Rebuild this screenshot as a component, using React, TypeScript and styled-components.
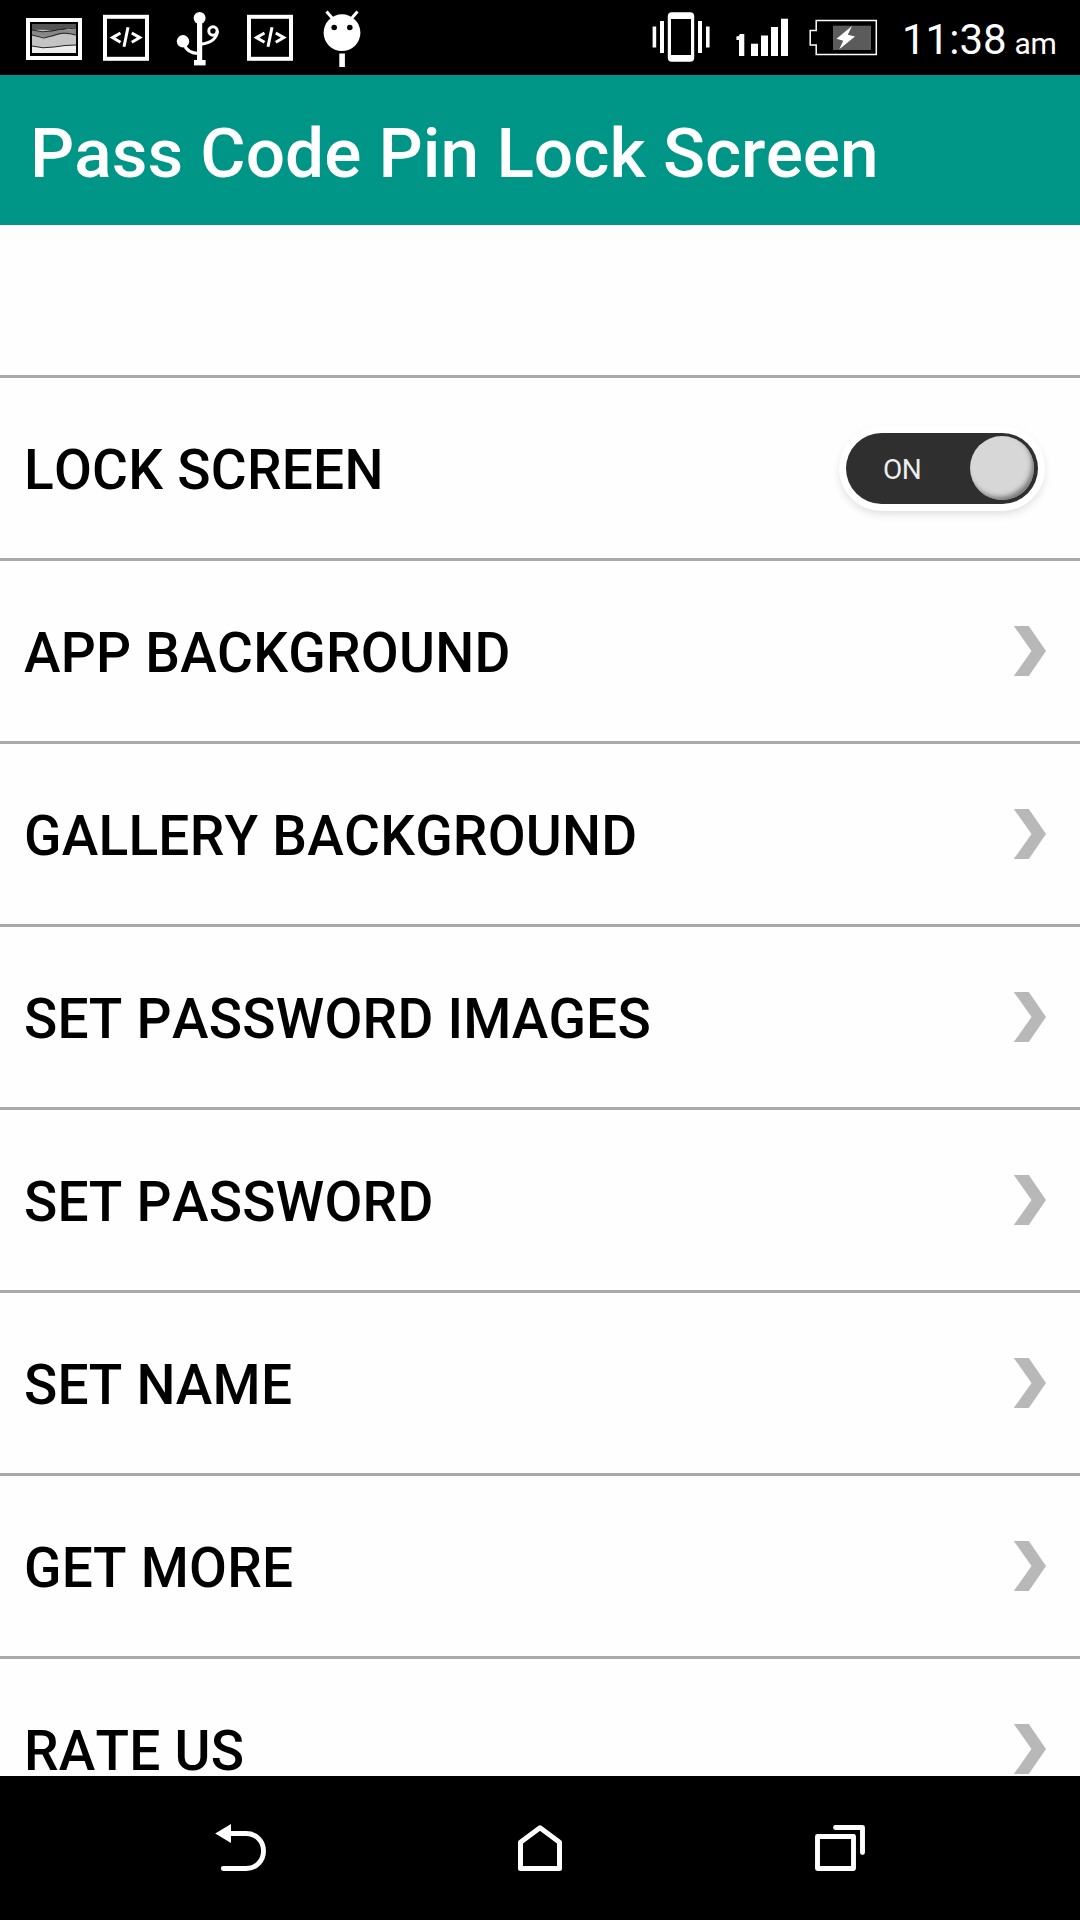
import React from "react";
import styled, { createGlobalStyle } from "styled-components";

const GlobalStyle = createGlobalStyle`
  body { margin: 0; background: #000; }
  * { box-sizing: border-box; }
`;

const Screen = styled.div`
  width: 1080px;
  height: 1920px;
  display: flex;
  flex-direction: column;
  overflow: hidden;
  background: #fefefe;
  font-family: Roboto, "Noto Sans", sans-serif;
  font-kerning: none;
`;

const StatusBar = styled.header`
  flex: none;
  height: 75px;
  display: flex;
  align-items: flex-start;
  padding-left: 26px;
  background: #000;
  color: #fff;
`;

const IconGroup = styled.div<{ $gap: number; $start?: number }>`
  display: flex;
  gap: ${(p) => p.$gap}px;
  margin-left: ${(p) => p.$start ?? 0}px;
`;

const Glyph = styled.svg`
  display: block;
  flex: none;
`;

const Clock = styled.div`
  display: flex;
  align-items: baseline;
  height: 75px;
  margin-left: 24px;
  font-size: 42px;
  line-height: 80px;
  white-space: nowrap;
`;

const Meridiem = styled.span`
  margin-left: 8px;
  font-size: 30px;
  letter-spacing: -0.5px;
`;

const AppBar = styled.div`
  flex: none;
  height: 150px;
  display: flex;
  align-items: center;
  padding: 8px 0 0 30px;
  background: #009687;
`;

const Title = styled.h1`
  margin: 0;
  color: #fff;
  font-size: 69.4px;
  font-weight: 500;
  line-height: 80px;
  white-space: nowrap;
`;

const List = styled.main`
  flex: 1;
  min-height: 0;
  overflow: hidden;
  padding-top: 150px;
`;

const Row = styled.div`
  height: 183px;
  border-top: 3px solid #a9a9a9;
  display: flex;
  align-items: center;
  justify-content: space-between;
  padding: 0 33px 0 24px;
`;

const Label = styled.span`
  padding-top: 4px;
  color: #000;
  font-size: 55px;
  font-weight: 500;
  line-height: 64px;
  letter-spacing: 0.25px;
  white-space: nowrap;
`;

const Switch = styled.div`
  width: 192px;
  height: 71px;
  margin-right: 9px;
  display: flex;
  align-items: center;
  justify-content: space-between;
  padding: 0 4px 0 37px;
  border-radius: 36px;
  background: #2f2f2f;
  box-shadow: 0 0 0 7px #fff, 0 4px 8px 6px rgba(0, 0, 0, 0.13);
`;

const SwitchText = styled.span`
  padding-top: 3px;
  color: #ededed;
  font-size: 28px;
  line-height: 32px;
  letter-spacing: -0.5px;
`;

const Knob = styled.span`
  width: 64px;
  height: 64px;
  border-radius: 50%;
  background: #d7d7d7;
  box-shadow: inset -3px -4px 5px -1px #777;
`;

const NavBar = styled.nav`
  flex: none;
  height: 144px;
  display: flex;
  justify-content: space-between;
  align-items: center;
  padding: 0 210px;
  background: #000;
`;

const Picture = () => (
  <Glyph width="56" height="75" viewBox="26 0 56 75">
    <rect x="28" y="20" width="52" height="38" fill="none" stroke="#fff" strokeWidth="4" />
    <rect x="32" y="24" width="44" height="29" fill="#c4c4c4" />
    <path d="M32 24H76V28Q69 27 64 30T52 31T32 30Z" fill="#555" />
    <path d="M32 30Q43 33 52 31T64 30T76 28V35Q66 32 58 35T44 37L32 35Z" fill="#888" />
    <path d="M32 46Q43 49 54 47T76 45V53H32Z" fill="#ededed" />
    <path
      d="M32 30Q43 33 52 31T64 29T76 28M32 35L44 38Q52 36 58 34T76 35M32 46Q43 49 54 47T76 45"
      fill="none"
      stroke="#222"
      strokeWidth="1"
    />
    <rect x="31" y="23" width="46" height="31" fill="none" stroke="#000" strokeWidth="2" />
  </Glyph>
);

const CodeBox = () => (
  <Glyph width="48" height="75" viewBox="102 0 48 75">
    <rect x="105" y="16.8" width="42" height="42" fill="none" stroke="#fff" strokeWidth="4" />
    <path d="M120.5 33L112.5 37.6L120.5 42.2M131.8 33L139.8 37.6L131.8 42.2" fill="none" stroke="#fff" strokeWidth="3" />
    <path d="M124 46.8L128 27.2" stroke="#fff" strokeWidth="3" />
  </Glyph>
);

const Usb = () => (
  <Glyph width="56" height="75" viewBox="170 0 56 75">
    <g fill="#fff">
      <circle cx="199.6" cy="18" r="6" />
      <circle cx="183" cy="41.3" r="6.2" />
      <rect x="197" y="18" width="5.2" height="44" />
      <rect x="194" y="60" width="11.6" height="5.4" />
    </g>
    <g fill="none" stroke="#fff">
      <circle cx="213" cy="31" r="4.2" strokeWidth="3" />
      <path d="M184 44Q187 53.5 199 53.5M201 44.2C211 43 217 38 217.4 31" strokeWidth="3.2" />
    </g>
  </Glyph>
);

const Droid = () => (
  <Glyph width="56" height="75" viewBox="314 0 56 75">
    <circle cx="342" cy="32.7" r="18.4" fill="#fff" />
    <path d="M333 19L326.5 11.5M351 19L357.5 11.5" stroke="#fff" strokeWidth="3" />
    <circle cx="334.2" cy="27.5" r="2.8" />
    <circle cx="349.8" cy="27.5" r="2.8" />
    <rect x="339.3" y="53.5" width="5.6" height="13.5" fill="#fff" />
  </Glyph>
);

const Vibrate = () => (
  <Glyph width="64" height="75" viewBox="651 0 64 75" fill="#fff">
    <rect x="667.8" y="12.2" width="26.4" height="49.6" rx="4" />
    <rect x="671" y="19" width="20" height="36" fill="#000" />
    <rect x="652.6" y="26.5" width="3.6" height="21" />
    <rect x="660" y="21" width="4" height="32" />
    <rect x="698" y="21" width="4" height="32" />
    <rect x="706" y="26.5" width="3.6" height="21" />
  </Glyph>
);

const Signal = () => (
  <Glyph width="57" height="75" viewBox="733 0 57 75" fill="#fff">
    <path d="M740 34H744.3V56H739V40H736.4V36.5Q739.4 36.5 740 34Z" />
    <rect x="751" y="43.7" width="7" height="12.3" />
    <rect x="761" y="35.5" width="7" height="20.5" />
    <rect x="771" y="27" width="7" height="29" />
    <rect x="781" y="18.7" width="7" height="37.3" />
  </Glyph>
);

const Battery = () => (
  <Glyph width="70" height="75" viewBox="808 0 70 75">
    <path d="M816.2 20.4H876.3V54.6H816.2V45H810.2V30.4H816.2Z" fill="none" stroke="#fff" strokeWidth="1.5" />
    <rect x="833" y="25.7" width="38" height="24.3" fill="#5b5b5b" />
    <path d="M852 26L836.5 38.8L843.2 40.8L839.3 49.3L855 36.6L847.8 34.7Z" fill="#fff" />
  </Glyph>
);

const Chevron = () => (
  <Glyph width="34" height="50" viewBox="0 0 34 50">
    <path d="M.8 0H15.8L33 25L15.8 50H.8L18.5 25Z" fill="#b8b8b8" />
  </Glyph>
);

const BackIcon = () => (
  <Glyph width="60" height="144" viewBox="210 1776 60 144">
    <path d="M215.2 1833.5L231 1824V1843Z" fill="#fff" />
    <path
      d="M230 1833.5H246C256 1833.5 263.5 1841 263.5 1851S256 1868.5 246 1868.5H223.3"
      fill="none"
      stroke="#fff"
      strokeWidth="4.9"
      strokeLinecap="round"
    />
  </Glyph>
);

const HomeIcon = () => (
  <Glyph width="60" height="144" viewBox="510 1776 60 144">
    <path
      d="M520.5 1842.2L540 1827.8L559.5 1842.2V1868.5H520.5Z"
      fill="none"
      stroke="#fff"
      strokeWidth="5"
      strokeLinejoin="round"
    />
  </Glyph>
);

const RecentsIcon = () => (
  <Glyph width="60" height="144" viewBox="810 1776 60 144">
    <g fill="none" stroke="#fff" strokeWidth="4.9" strokeLinejoin="round" strokeLinecap="round">
      <rect x="817.5" y="1836.5" width="36" height="32" />
      <path d="M835.5 1827.5H862.5V1852.5" />
    </g>
  </Glyph>
);

const links = [
  "APP BACKGROUND",
  "GALLERY BACKGROUND",
  "SET PASSWORD IMAGES",
  "SET PASSWORD",
  "SET NAME",
  "GET MORE",
  "RATE US",
];

export default function App() {
  return (
    <>
      <GlobalStyle />
      <Screen>
        <StatusBar>
          <IconGroup $gap={20}>
            <Picture />
            <CodeBox />
            <Usb />
            <CodeBox />
            <Droid />
          </IconGroup>
          <IconGroup $gap={18} $start={281}>
            <Vibrate />
            <Signal />
            <Battery />
          </IconGroup>
          <Clock>
            11:38<Meridiem>am</Meridiem>
          </Clock>
        </StatusBar>
        <AppBar>
          <Title>Pass Code Pin Lock Screen</Title>
        </AppBar>
        <List>
          <Row>
            <Label>LOCK SCREEN</Label>
            <Switch>
              <SwitchText>ON</SwitchText>
              <Knob />
            </Switch>
          </Row>
          {links.map((text) => (
            <Row key={text}>
              <Label>{text}</Label>
              <Chevron />
            </Row>
          ))}
        </List>
        <NavBar>
          <BackIcon />
          <HomeIcon />
          <RecentsIcon />
        </NavBar>
      </Screen>
    </>
  );
}
